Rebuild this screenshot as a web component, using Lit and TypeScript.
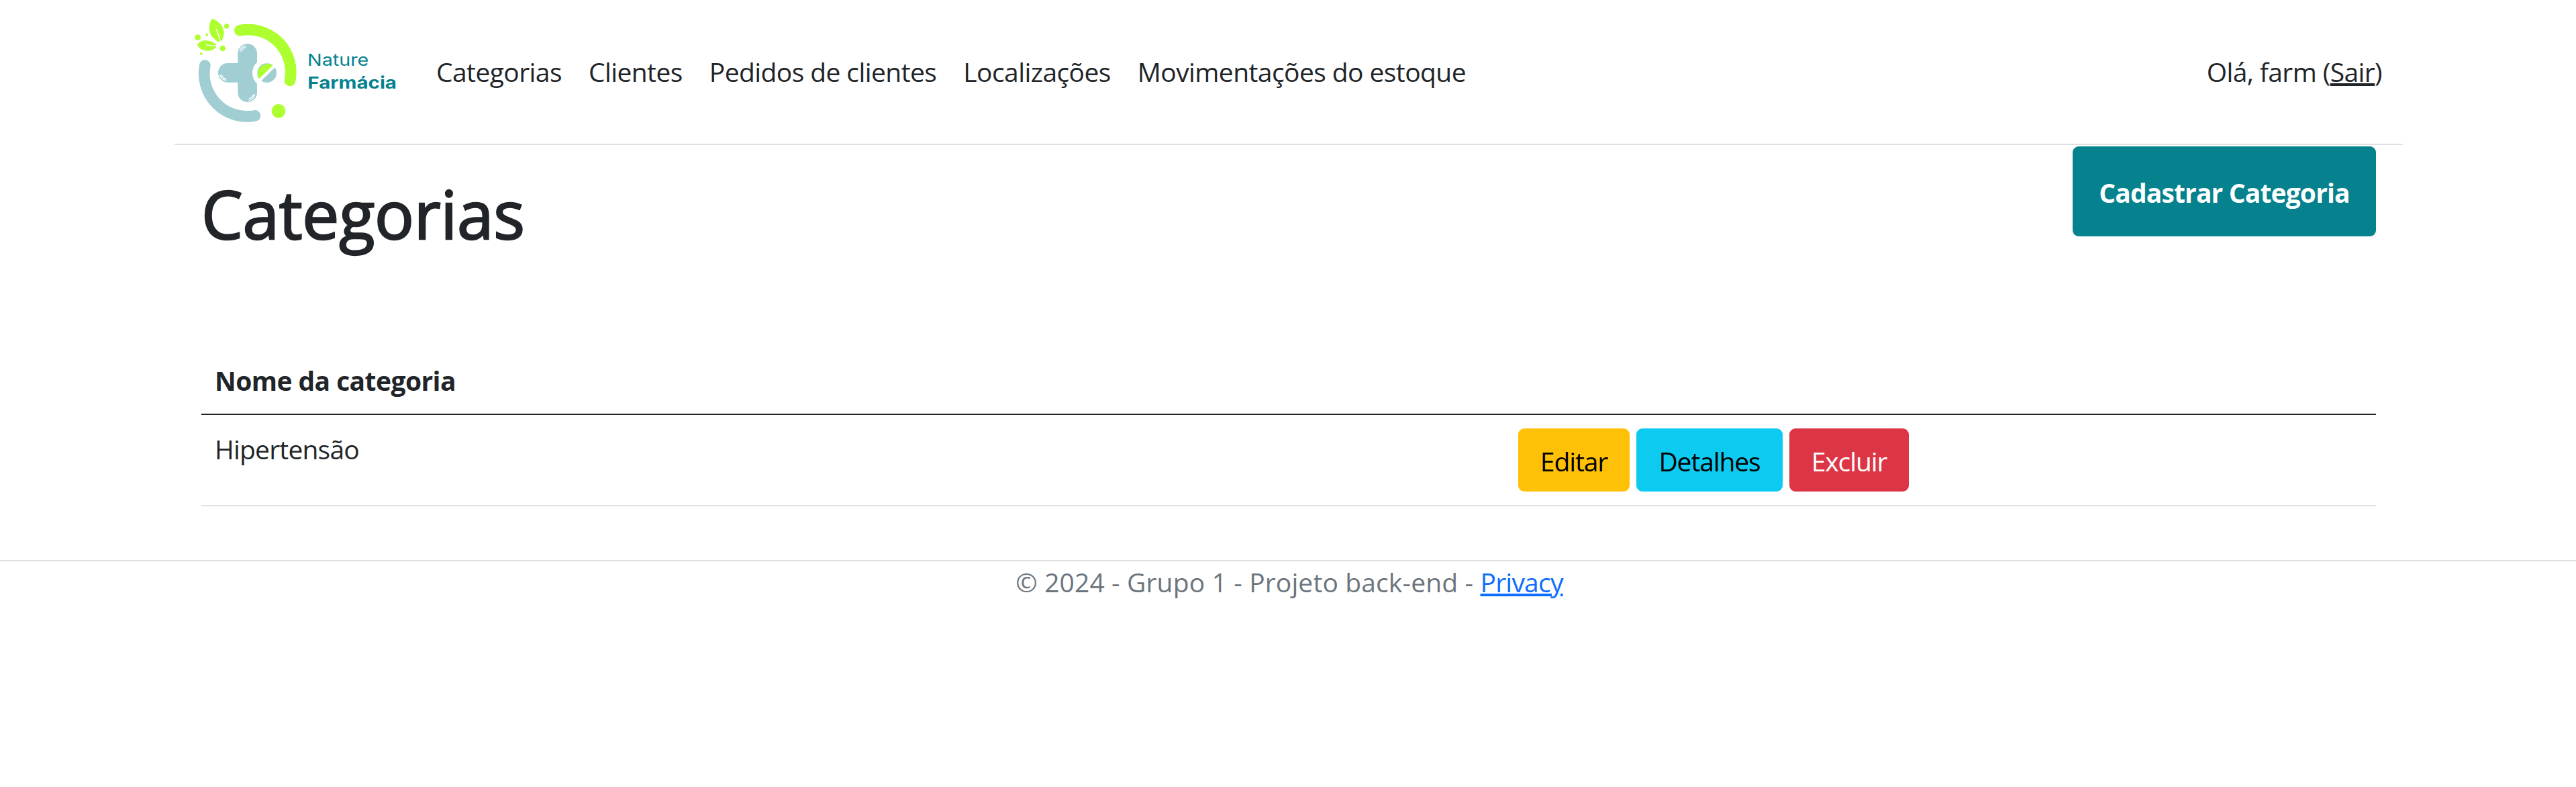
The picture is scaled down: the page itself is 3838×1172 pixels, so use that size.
import { LitElement, html, css, svg } from "lit";
import { customElement, property } from "lit/decorators.js";

const NAV = ["Categorias", "Clientes", "Pedidos de clientes", "Localizações", "Movimentações do estoque"];
const ROWS = ["Hipertensão"];
const ACTIONS = [
  { kind: "edit", label: "Editar" },
  { kind: "details", label: "Detalhes" },
  { kind: "remove", label: "Excluir" },
];

@customElement("brand-logo")
class BrandLogo extends LitElement {
  static styles = css`
    :host { display: block; width: 310px; height: 170px; }
    svg { display: block; width: 100%; height: 100%; }
    .green { fill: #adff2f; }
    .blue { fill: #a0ced2; }
    .white { fill: #fff; }
    .arc { fill: none; stroke-width: 50; stroke-linecap: round; }
    .arc.lime { stroke: #adff2f; }
    .arc.aqua { stroke: #a0ced2; }
    .shine { fill: none; stroke: #fff; stroke-width: 4; stroke-linecap: round; }
    .vein { fill: none; stroke: #fff; stroke-width: 4; stroke-linecap: round; }
    .split { stroke: #fff; stroke-width: 13; }
    .name { font-family: Inter, sans-serif; font-size: 74px; fill: #05828e; }
    .strong { font-weight: 700; }
  `;
  render() {
    return html`<svg viewBox="105 60 930 510" role="img" aria-label="Nature Farmácia">
      ${svg`
      <path class="arc lime" d="M322 136 A190 190 0 0 1 546 360"/>
      <path class="arc aqua" d="M166 292 A192 192 0 0 0 390 517"/>
      <circle class="green" cx="495" cy="496" r="31"/>
      <rect class="blue" x="313" y="196" width="86" height="260" rx="43"/>
      <path class="blue" d="M268 282 H399 V368 H268 A43 43 0 0 1 268 282Z"/>
      <circle class="white" cx="443" cy="326" r="65"/>
      <circle class="blue" cx="443" cy="326" r="43"/>
      <path class="green" d="M412 356 A43 43 0 0 1 473 296Z"/>
      <path class="split" d="M403 366 L484 287"/>
      <path class="shine" d="M323 229 Q326 209 346 205 M330 230 Q334 217 348 210"/>
      <path class="shine" d="M233 336 Q240 355 260 359 M239 334 Q247 349 261 353"/>
      <path class="shine" d="M363 448 Q384 444 389 422 M365 440 Q378 436 383 424"/>
      <path class="green" d="M197 84 C232 94 252 122 251 150 C249 166 244 178 240 185 C234 177 228 184 229 189 C207 175 185 159 185 126 C186 108 190 92 197 84Z"/>
      <path class="vein" d="M216 130 Q229 155 235 186"/>
      <path class="green" d="M132 199 C148 173 192 176 216 198 L216 211 C204 224 188 229 172 227 C150 224 137 214 132 199Z"/>
      <path class="vein" d="M172 200 Q195 205 217 204"/>
      <circle class="green" cx="263" cy="117" r="11"/>
      <circle class="green" cx="134" cy="167" r="13"/>
      <circle class="green" cx="175" cy="155" r="6"/>
      <circle class="green" cx="245" cy="216" r="13"/>
      <circle class="green" cx="149" cy="240" r="6"/>
      <text class="name" x="624" y="294" textLength="274" lengthAdjust="spacingAndGlyphs">Nature</text>
      <text class="name strong" x="625" y="396" textLength="398" lengthAdjust="spacingAndGlyphs">Farmácia</text>
      `}
    </svg>`;
  }
}

@customElement("category-table")
class CategoryTable extends LitElement {
  @property({ attribute: false }) rows: string[] = [];
  static styles = css`
    :host { display: block; }
    .head, .row { display: grid; grid-template-columns: 1942px 1fr; }
    .head { border-bottom: 2px solid #212529; font-weight: 700; letter-spacing: -0.57px; }
    .row { border-bottom: 2px solid #dee2e6; }
    .th { padding: 19px 20px; line-height: 60px; }
    .td { padding: 20px; height: 94px; line-height: 61px; letter-spacing: -0.8px; }
    .actions { display: flex; gap: 10px; }
    .btn { box-sizing: border-box; height: 94px; padding-top: 3px; display: flex; align-items: center; justify-content: center;
      border-radius: 9px; letter-spacing: -1.1px; color: #000; text-decoration: none; }
    .edit { background: #ffc107; width: 166px; }
    .details { background: #0dcaf0; width: 218px; }
    .remove { background: #dc3545; color: #fff; width: 178px; }
  `;
  render() {
    return html`
      <div class="head"><div class="th">Nome da categoria</div><div class="th"></div></div>
      ${this.rows.map((name) => html`<div class="row">
        <div class="td">${name}</div>
        <div class="td actions">${ACTIONS.map((a) => html`<a class="btn ${a.kind}">${a.label}</a>`)}</div>
      </div>`)}`;
  }
}

@customElement("app-root")
class AppRoot extends LitElement {
  static styles = css`
    :host { display: block; min-height: 1172px; background: #fff; color: #212529;
      font-family: "Open Sans", "Noto Sans", sans-serif; font-size: 39px; line-height: 60px; }
    .header { box-sizing: border-box; width: 3320px; height: 216px; margin-left: 260px; padding: 0 31px 0 25px;
      border-bottom: 2px solid #dee2e6; display: flex; align-items: center; }
    .logo { margin-bottom: 4px; }
    .nav { display: flex; gap: 40px; margin-left: 55px; flex: 1; letter-spacing: -0.58px; }
    .user { letter-spacing: -0.6px; }
    .link { text-decoration: underline; text-decoration-thickness: 4px; text-underline-offset: 2px; }
    .main { width: 3240px; margin-left: 300px; padding-top: 2px; }
    .top { display: flex; justify-content: space-between; align-items: flex-start; height: 300px; }
    .title { margin: 40px 0 0; font-size: 98px; line-height: 120px; font-weight: 400; letter-spacing: -0.25px; -webkit-text-stroke: 2.4px #212529; }
    .create { box-sizing: border-box; width: 452px; height: 134px; padding-top: 4px; display: flex; align-items: center; justify-content: center;
      background: #05828e; color: #fff; border-radius: 9px; font-weight: 700; letter-spacing: -0.86px; }
    .footer { margin-top: 80px; border-top: 2px solid #dee2e6; padding-left: 4px; line-height: 62px; text-align: center;
      color: #6c757d; letter-spacing: 0.13px; }
    .privacy { color: #0d6efd; letter-spacing: -0.77px; }
  `;
  render() {
    return html`
      <header class="header">
        <brand-logo class="logo"></brand-logo>
        <nav class="nav">${NAV.map((n) => html`<a>${n}</a>`)}</nav>
        <div class="user">Olá, farm (<a class="link">Sair</a>)</div>
      </header>
      <main class="main">
        <div class="top">
          <h1 class="title">Categorias</h1>
          <a class="create">Cadastrar Categoria</a>
        </div>
        <category-table .rows=${ROWS}></category-table>
      </main>
      <footer class="footer">© 2024 - Grupo 1 - Projeto back-end - <a class="link privacy">Privacy</a></footer>`;
  }
}
